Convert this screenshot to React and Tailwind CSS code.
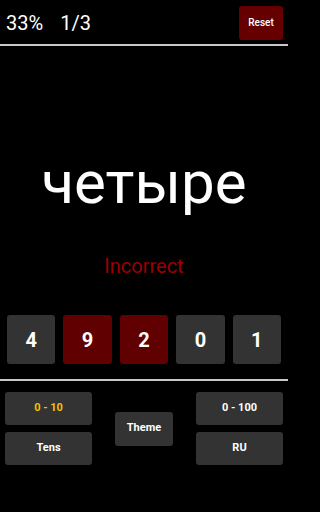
export default function App() {
  const digits = [
    { d: "4", bad: false },
    { d: "9", bad: true },
    { d: "2", bad: true },
    { d: "0", bad: false },
    { d: "1", bad: false },
  ];

  return (
    <div className="bg-black w-full min-h-screen">
      <div className="bg-black text-white w-[288px] h-[512px] flex flex-col overflow-hidden"
           style={{ fontFamily: "Roboto, 'Noto Sans', sans-serif" }}>
        {/* top bar */}
        <div className="h-[44px] shrink-0 flex items-center justify-between pl-[6px] pr-[5px] pt-[1px]">
          <div className="flex gap-[17px] text-[20px] leading-none">
            <span>33%</span>
            <span>1/3</span>
          </div>
          <button className="w-[44px] h-[34px] rounded-[3px] bg-[#660000] text-[10px] font-medium">
            Reset
          </button>
        </div>
        <hr className="shrink-0 border-0 h-[2px] bg-[#c8c8c8]" />

        {/* word */}
        <div className="h-[246px] shrink-0 flex flex-col items-center">
          <div className="mt-[107px] text-[60px] leading-none">четыре</div>
          <div className="mt-[43px] text-[20px] leading-none text-[#9a0000]">Incorrect</div>
        </div>

        {/* digits */}
        <div className="shrink-0 flex gap-[8px] px-[7px] mt-[23px]">
          {digits.map((x, i) => (
            <div key={i}
                 className={x.bad
                   ? "w-[49px] h-[49px] rounded-[3px] bg-[#600000] flex items-center justify-center text-[20px] font-bold"
                   : "w-[49px] h-[49px] rounded-[3px] bg-[#333333] flex items-center justify-center text-[20px] font-bold"}>
              {x.d}
            </div>
          ))}
        </div>
        <hr className="shrink-0 mt-[15px] border-0 h-[2px] bg-[#c8c8c8]" />

        {/* controls */}
        <div className="shrink-0 flex items-center justify-between px-[5px] mt-[11px]">
          <div className="flex flex-col gap-[7px]">
            <button className="w-[87px] h-[33px] rounded-[3px] bg-[#333333] text-[11px] font-bold text-[#f5c000]">0 - 10</button>
            <button className="w-[87px] h-[33px] rounded-[3px] bg-[#333333] text-[11px] font-bold">Tens</button>
          </div>
          <button className="w-[58px] h-[34px] rounded-[3px] bg-[#333333] text-[11px] font-bold">Theme</button>
          <div className="flex flex-col gap-[7px]">
            <button className="w-[87px] h-[33px] rounded-[3px] bg-[#333333] text-[11px] font-bold">0 - 100</button>
            <button className="w-[87px] h-[33px] rounded-[3px] bg-[#333333] text-[11px] font-bold">RU</button>
          </div>
        </div>
      </div>
    </div>
  );
}
